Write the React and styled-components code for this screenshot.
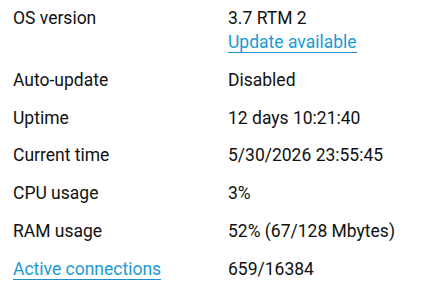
import React from "react";
import styled, { createGlobalStyle } from "styled-components";

const GlobalStyle = createGlobalStyle`
  html, body {
    margin: 0;
    padding: 0;
    background: #ffffff;
  }
  body {
    font-family: Roboto, "Liberation Sans", Arial, sans-serif;
    font-size: 17.5px;
    color: #111;
  }
`;

const Table = styled.div`
  display: grid;
  grid-template-columns: 215px 1fr;
  padding: 0 13px;
`;

const Cell = styled.div`
  padding: 8px 0;
  line-height: 21.8px;
  display: flex;
  flex-direction: column;
  align-items: flex-start;
`;

const Link = styled.a`
  display: inline-block;
  color: #1a9ad6;
  text-decoration: none;
  line-height: 20px;
  border-bottom: 1px solid #1e8fce;
  margin-top: ${(p) => (p.$sub ? "2px" : "0")};
  margin-bottom: ${(p) => (p.$sub ? "1px" : "0")};
  cursor: pointer;
`;

const rows = [
  { label: "Auto-update", value: "Disabled" },
  { label: "Uptime", value: "12 days 10:21:40" },
  { label: "Current time", value: "5/30/2026 23:55:45" },
  { label: "CPU usage", value: "3%" },
  { label: "RAM usage", value: "52% (67/128 Mbytes)" },
];

export default function App() {
  return (
    <>
      <GlobalStyle />
      <Table>
        <Cell>OS version</Cell>
        <Cell>
          <span>3.7 RTM 2</span>
          <Link $sub href="#">Update available</Link>
        </Cell>
        {rows.map((r) => (
          <React.Fragment key={r.label}>
            <Cell>{r.label}</Cell>
            <Cell>{r.value}</Cell>
          </React.Fragment>
        ))}
        <Cell>
          <Link href="#">Active connections</Link>
        </Cell>
        <Cell>659/16384</Cell>
      </Table>
    </>
  );
}
